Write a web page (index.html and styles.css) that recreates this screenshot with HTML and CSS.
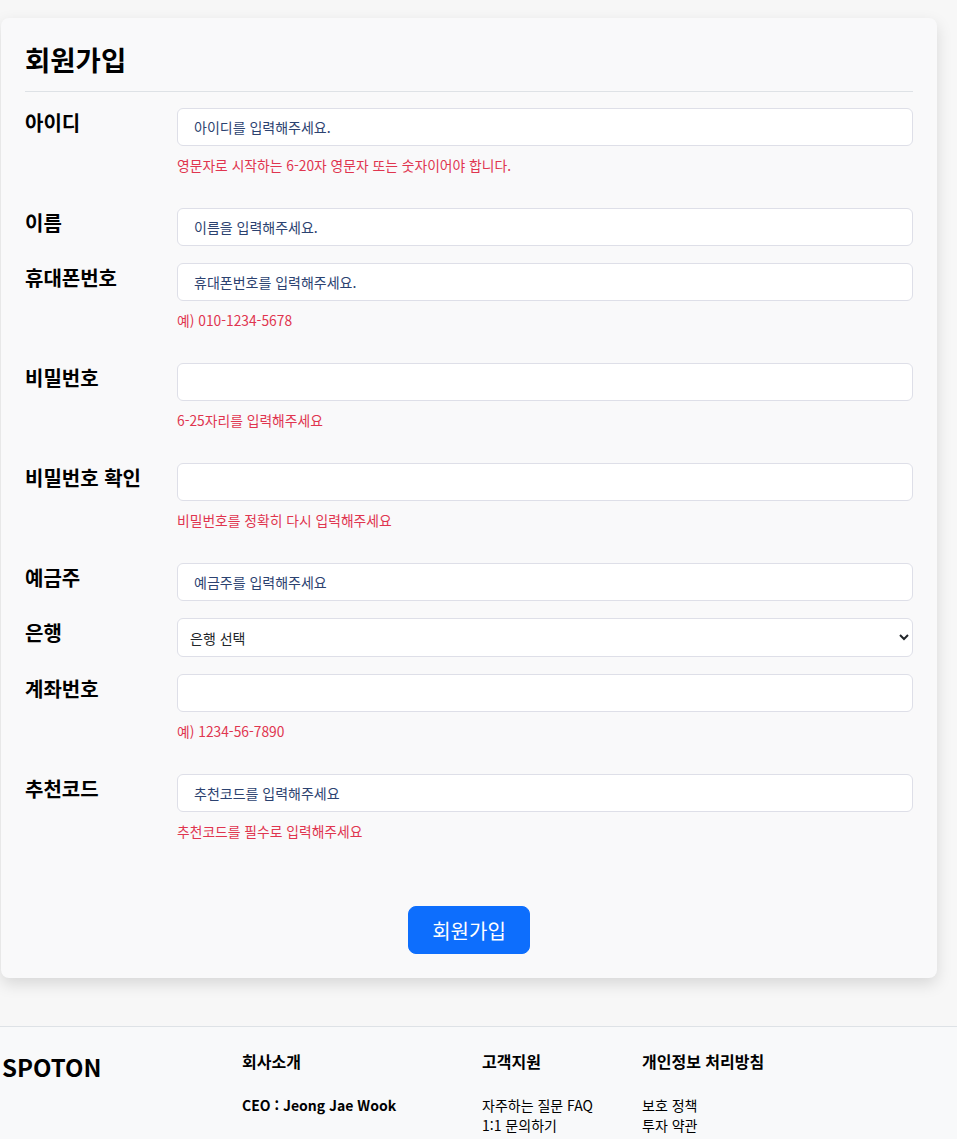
FILE: index.html
```html
<!DOCTYPE html>
<html lang="ko">
<head>
<meta charset="utf-8" />
<title>회원가입 - SPOTON</title>
<meta name="viewport" content="width=device-width, initial-scale=1">
<link rel="stylesheet" href="styles.css">
</head>

<body>
<main class="page">
  <form name="signup" class="card" action="#" method="post">
    <h2 class="card-title">회원가입</h2>

    <div class="fields">
      <div class="field">
        <label class="field-label" for="userId">아이디</label>
        <div class="field-control">
          <input type="text" id="userId" name="userId" class="textbox" placeholder="아이디를 입력해주세요.">
          <p class="help">영문자로 시작하는 6-20자 영문자 또는 숫자이어야 합니다.</p>
        </div>
      </div>

      <div class="field">
        <label class="field-label" for="name">이름</label>
        <div class="field-control">
          <input type="text" id="name" name="name" class="textbox" placeholder="이름을 입력해주세요.">
        </div>
      </div>

      <div class="field">
        <label class="field-label" for="phone">휴대폰번호</label>
        <div class="field-control">
          <input type="tel" id="phone" name="phone" class="textbox" placeholder="휴대폰번호를 입력해주세요.">
          <p class="help">예) 010-1234-5678</p>
        </div>
      </div>

      <div class="field">
        <label class="field-label" for="password">비밀번호</label>
        <div class="field-control">
          <input type="password" id="password" name="password" class="textbox">
          <p class="help">6-25자리를 입력해주세요</p>
        </div>
      </div>

      <div class="field">
        <label class="field-label" for="passwordConfirm">비밀번호 확인</label>
        <div class="field-control">
          <input type="password" id="passwordConfirm" name="passwordConfirm" class="textbox">
          <p class="help">비밀번호를 정확히 다시 입력해주세요</p>
        </div>
      </div>

      <div class="field">
        <label class="field-label" for="holder">예금주</label>
        <div class="field-control">
          <input type="text" id="holder" name="holder" class="textbox" placeholder="예금주를 입력해주세요">
        </div>
      </div>

      <div class="field">
        <label class="field-label" for="bank">은행</label>
        <div class="field-control">
          <select id="bank" name="bank" class="select">
            <option value="">은행 선택</option>
            <option value="kb">국민은행</option>
            <option value="shinhan">신한은행</option>
            <option value="woori">우리은행</option>
            <option value="hana">하나은행</option>
            <option value="nh">농협은행</option>
          </select>
        </div>
      </div>

      <div class="field">
        <label class="field-label" for="account">계좌번호</label>
        <div class="field-control">
          <input type="text" id="account" name="account" class="textbox">
          <p class="help">예) 1234-56-7890</p>
        </div>
      </div>

      <div class="field">
        <label class="field-label" for="refCode">추천코드</label>
        <div class="field-control">
          <input type="text" id="refCode" name="refCode" class="textbox" placeholder="추천코드를 입력해주세요">
          <p class="help">추천코드를 필수로 입력해주세요</p>
        </div>
      </div>
    </div>

    <div class="actions">
      <button type="submit" class="btn-submit">회원가입</button>
    </div>
  </form>
</main>

<footer class="footer">
  <div class="footer-brand">SPOTON</div>

  <div class="footer-col">
    <h4 class="footer-title">회사소개</h4>
    <ul class="footer-list">
      <li class="footer-strong">CEO : Jeong Jae Wook</li>
    </ul>
  </div>

  <div class="footer-col">
    <h4 class="footer-title">고객지원</h4>
    <ul class="footer-list">
      <li><a href="#">자주하는 질문 FAQ</a></li>
      <li><a href="#">1:1 문의하기</a></li>
    </ul>
  </div>

  <div class="footer-col">
    <h4 class="footer-title">개인정보 처리방침</h4>
    <ul class="footer-list">
      <li><a href="#">보호 정책</a></li>
      <li><a href="#">투자 약관</a></li>
    </ul>
  </div>
</footer>
</body>
</html>
```

FILE: styles.css
```css
body {
  margin: 0;
  background-color: #f7f7f7;
  color: #000;
  font-family: "Noto Sans CJK KR", "Noto Sans", sans-serif;
}

.page {
  padding: 18px 20px 48px 1px;
}

.card {
  background-color: #f9f9fa;
  border-radius: 8px;
  box-shadow: 0 6px 16px rgba(0, 0, 0, 0.13);
  padding: 24px;
}

.card-title {
  margin: 0;
  font-size: 27.5px;
  line-height: 34px;
  font-weight: bold;
  padding-bottom: 15px;
  border-bottom: 1px solid #dee2e6;
}

.fields {
  margin-top: 16px;
}

.field {
  display: grid;
  grid-template-columns: 152px 1fr;
  margin-bottom: 17px;
}

.field-label {
  font-size: 20px;
  line-height: 30px;
  font-weight: bold;
}

.textbox, .select {
  display: block;
  width: 100%;
  box-sizing: border-box;
  border: 1px solid #dedfe8;
  border-radius: 6px;
  background-color: #fff;
  font-family: inherit;
  font-size: 14px;
  color: #212529;
}

.textbox {
  height: 38px;
  padding: 0 16px;
}

.textbox::placeholder {
  color: #2c4270;
}

.select {
  height: 39px;
  padding: 0 8px;
}

.help {
  margin: 9px 0 16px;
  font-size: 13.8px;
  line-height: 20px;
  color: #e0354f;
}

.actions {
  display: flex;
  justify-content: center;
  margin-top: 49px;
}

.btn-submit {
  height: 48px;
  padding: 0 23px;
  background-color: #0d6efd;
  border: 1px solid #0d6efd;
  border-radius: 8px;
  color: #fff;
  font-family: inherit;
  font-size: 20px;
  cursor: pointer;
}

.footer {
  display: grid;
  grid-template-columns: 240px 240px 160px 1fr;
  background-color: #f8f9fa;
  border-top: 1px solid #dee2e6;
  padding: 24px 0 24px 2px;
}

.footer-brand {
  font-size: 24px;
  line-height: 32px;
  font-weight: bold;
}

.footer-title {
  margin: 0 0 24px;
  font-size: 16px;
  line-height: 20px;
  font-weight: bold;
}

.footer-list {
  list-style: none;
  margin: 0;
  padding: 0;
  font-size: 14px;
  line-height: 20px;
}

.footer-list a {
  color: #000;
  text-decoration: none;
}

.footer-strong {
  font-weight: bold;
}
```
